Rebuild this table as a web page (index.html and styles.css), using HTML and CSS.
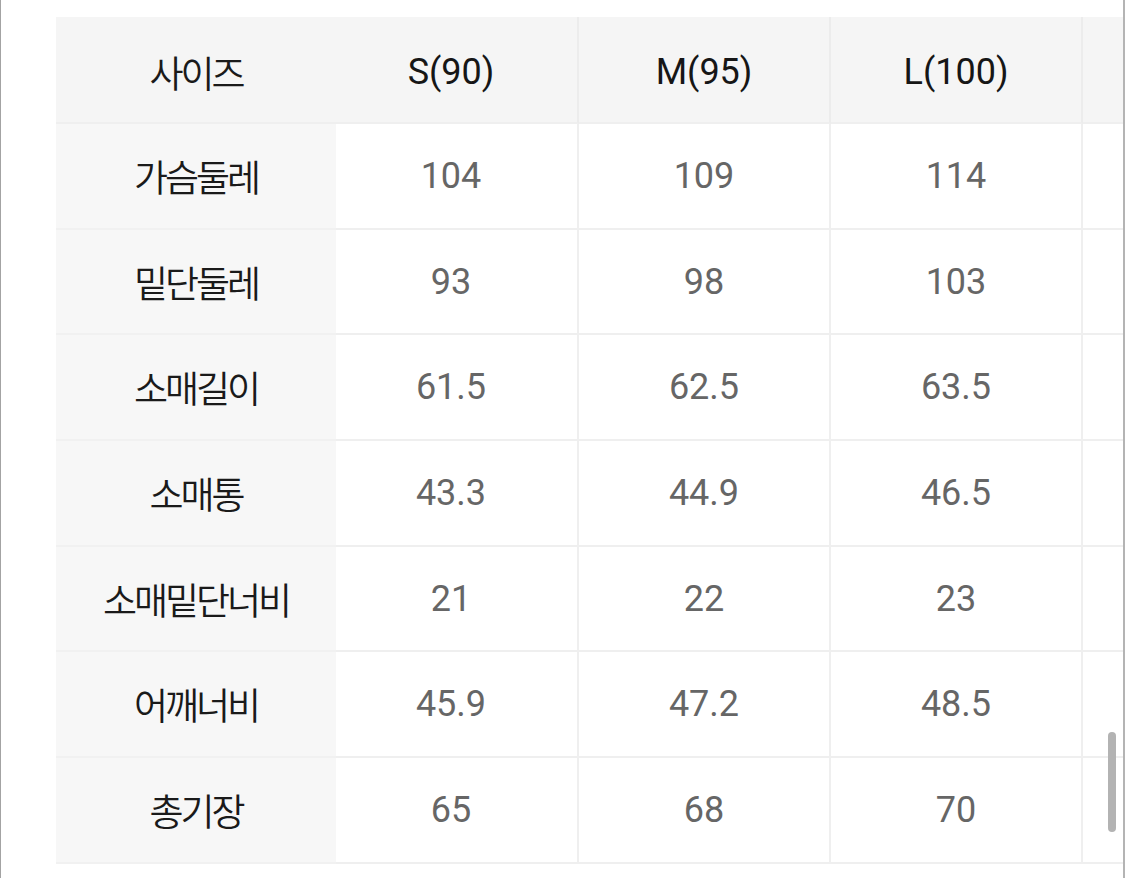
FILE: index.html
```html
<!DOCTYPE html>
<html lang="ko">
<head>
<meta charset="utf-8">
<title>사이즈표</title>
<link rel="stylesheet" href="styles.css">
</head>
<body>
<div class="frame">
  <div class="viewport">
    <table class="size-table">
      <colgroup>
        <col class="c0"><col class="c1"><col class="c2"><col class="c3"><col class="c4">
      </colgroup>
      <thead>
        <tr>
          <th class="label">사이즈</th>
          <th class="first">S(90)</th>
          <th>M(95)</th>
          <th>L(100)</th>
          <th></th>
        </tr>
      </thead>
      <tbody>
        <tr><th class="label">가슴둘레</th><td class="first">104</td><td>109</td><td>114</td><td></td></tr>
        <tr><th class="label">밑단둘레</th><td class="first">93</td><td>98</td><td>103</td><td></td></tr>
        <tr><th class="label">소매길이</th><td class="first">61.5</td><td>62.5</td><td>63.5</td><td></td></tr>
        <tr><th class="label">소매통</th><td class="first">43.3</td><td>44.9</td><td>46.5</td><td></td></tr>
        <tr><th class="label">소매밑단너비</th><td class="first">21</td><td>22</td><td>23</td><td></td></tr>
        <tr><th class="label">어깨너비</th><td class="first">45.9</td><td>47.2</td><td>48.5</td><td></td></tr>
        <tr><th class="label">총기장</th><td class="first">65</td><td>68</td><td>70</td><td></td></tr>
      </tbody>
    </table>
  </div>
  <div class="scrollbar"></div>
</div>
</body>
</html>
```
FILE: styles.css
```css
html, body {
  margin: 0;
  padding: 0;
  background: #ffffff;
}

.frame {
  position: relative;
  width: 1125px;
  height: 878px;
  box-sizing: border-box;
  border-left: 1px solid #a3a3a3;
  border-right: 2px solid #b4b4b4;
  overflow: hidden;
}

.viewport {
  width: 1122px;
  height: 878px;
  box-sizing: border-box;
  padding: 17px 0 0 55px;
  overflow: hidden;
}

.size-table {
  border-collapse: separate;
  border-spacing: 0;
  table-layout: fixed;
  width: 1279px;
  font-family: "Roboto", "Noto Sans CJK KR", sans-serif;
  font-size: 36px;
  font-weight: 400;
}

.c0 { width: 280px; }
.c1 { width: 243px; }
.c2 { width: 252px; }
.c3 { width: 252px; }
.c4 { width: 252px; }

.size-table th,
.size-table td {
  padding: 0;
  text-align: center;
  vertical-align: middle;
  border-right: 2px solid #efefef;
  border-bottom: 2px solid #efefef;
  font-weight: 400;
  white-space: nowrap;
}

.size-table thead tr {
  height: 107px;
}

.size-table thead th {
  background: #f5f5f5;
  color: #161616;
  border-right-color: #ececec;
  padding-top: 5px;
}

.size-table tbody tr {
  height: 105.7px;
}

.size-table td {
  background: #ffffff;
  color: #666666;
}

.size-table .label {
  background: #f7f7f7;
  color: #1a1a1a;
  border-right: none;
  font-family: "Noto Sans CJK KR", sans-serif;
  font-size: 37px;
  font-weight: 350;
  letter-spacing: -3px;
}

.size-table thead .label {
  background: #f5f5f5;
}

.size-table tbody .label {
  border-bottom-color: #f1f1f1;
}

.size-table .first {
  padding-right: 11px;
}

.scrollbar {
  position: absolute;
  left: 1107px;
  top: 732px;
  width: 8px;
  height: 100px;
  border-radius: 4px;
  background: #b3b3b3;
}
```
